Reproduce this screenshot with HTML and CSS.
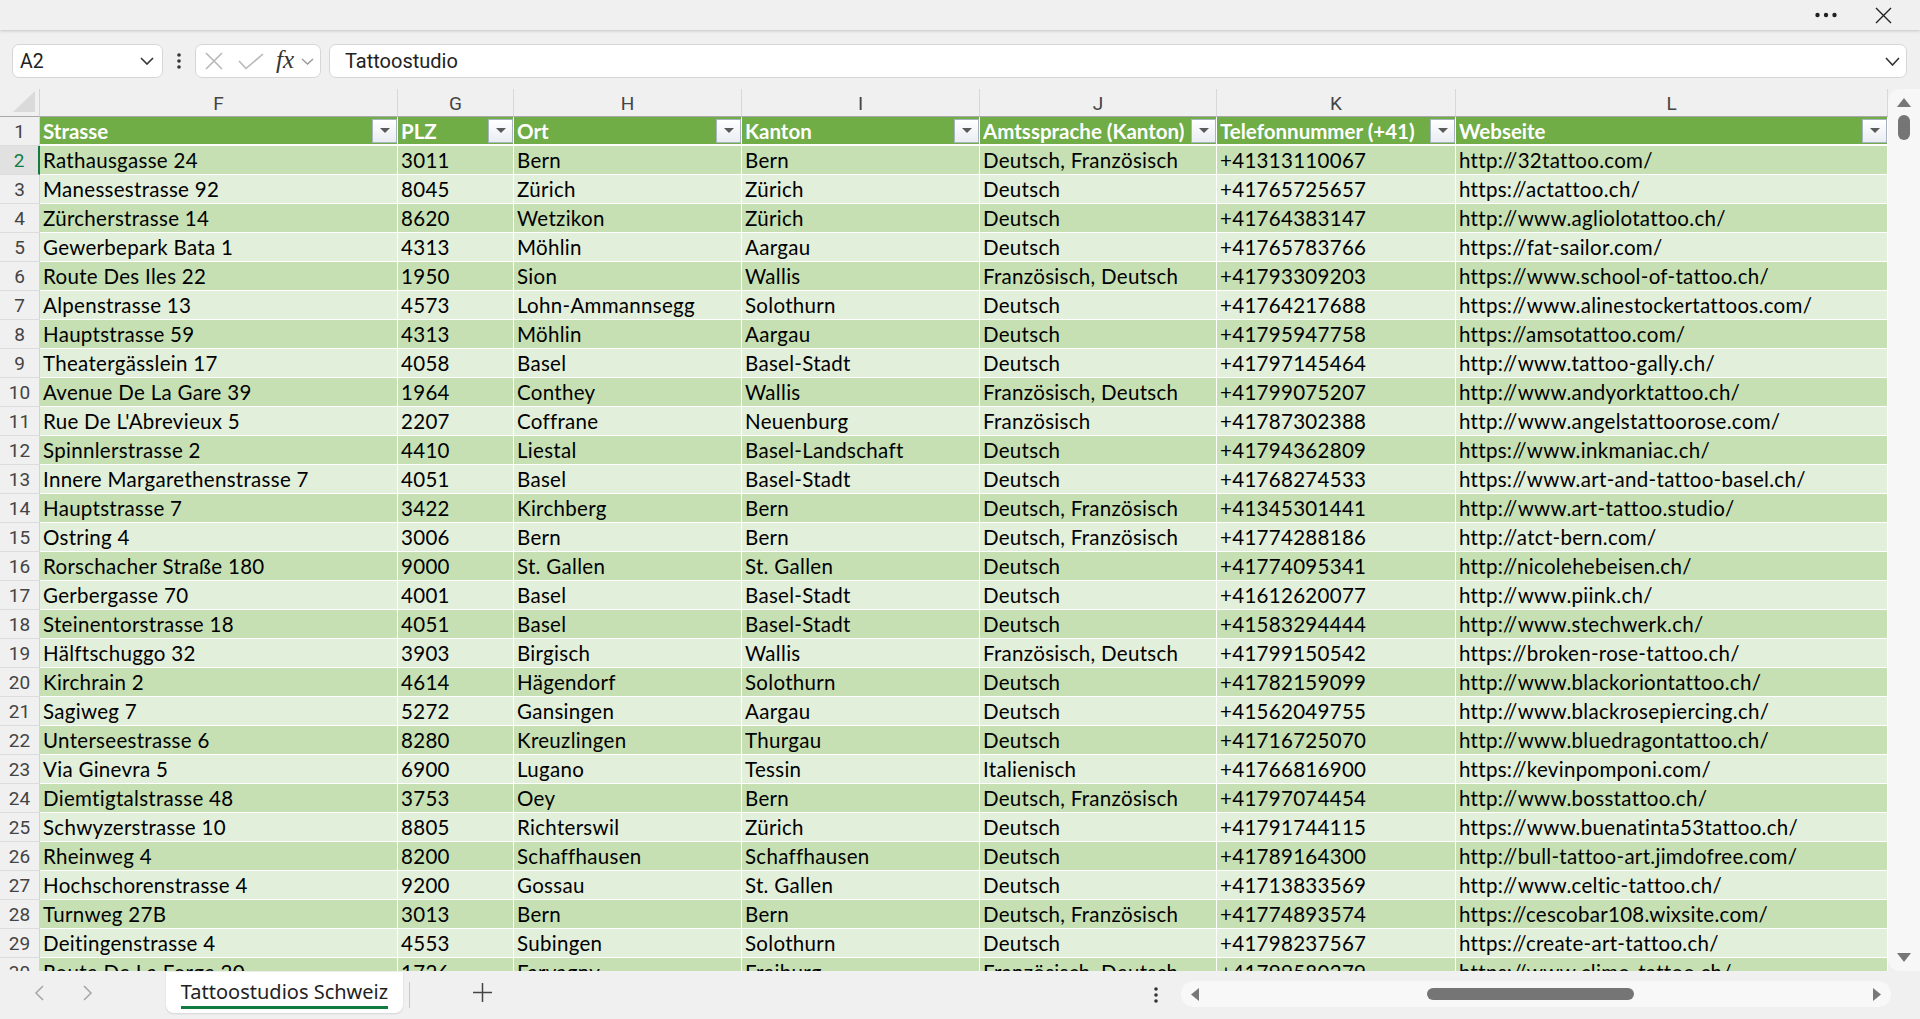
FILE: index.html
```
<!DOCTYPE html>
<html lang="de">
<head>
<meta charset="utf-8">
<title>Tattoostudios Schweiz</title>
<link rel="stylesheet" href="styles.css">
</head>
<body>

<div class="titlebar">
  <svg class="tb-more" width="22" height="6" viewBox="0 0 22 6"><circle cx="2.5" cy="3" r="2.2"/><circle cx="11" cy="3" r="2.2"/><circle cx="19.5" cy="3" r="2.2"/></svg>
  <svg class="tb-close" width="17" height="17" viewBox="0 0 17 17"><path d="M1 1L16 16M16 1L1 16"/></svg>
</div>

<div class="formula-row">
  <div class="namebox">
    <span>A2</span>
    <svg width="14" height="8" viewBox="0 0 14 8"><polyline points="1,1 7,7 13,1"/></svg>
  </div>
  <svg class="vdots" width="4" height="16" viewBox="0 0 4 16"><circle cx="2" cy="2" r="1.8"/><circle cx="2" cy="8" r="1.8"/><circle cx="2" cy="14" r="1.8"/></svg>
  <div class="fxbox">
    <svg class="fx-cancel" width="18" height="18" viewBox="0 0 18 18"><path d="M1 1L17 17M17 1L1 17"/></svg>
    <svg class="fx-enter" width="26" height="17" viewBox="0 0 26 17"><polyline points="1,8 8,15.5 25,1"/></svg>
    <span class="fx">fx</span>
    <svg class="fx-chev" width="13" height="7" viewBox="0 0 13 7"><polyline points="1,1 6.5,6 12,1"/></svg>
  </div>
  <div class="formula-input">
    <span>Tattoostudio</span>
    <svg width="15" height="9" viewBox="0 0 15 9"><polyline points="1,1 7.5,8 14,1"/></svg>
  </div>
</div>

<div class="sheet-area">
  <div class="grid">
    <div class="row letters">
      <div class="corner"><svg width="22" height="21" viewBox="0 0 22 21"><polygon points="22,0 22,21 0,21"/></svg></div>
      <div>F</div><div>G</div><div>H</div><div>I</div><div>J</div><div>K</div><div>L</div>
    </div>
    <div class="row head">
      <div class="rn">1</div>
      <div><span>Strasse</span><i class="filter"></i></div>
      <div><span>PLZ</span><i class="filter"></i></div>
      <div><span>Ort</span><i class="filter"></i></div>
      <div><span>Kanton</span><i class="filter"></i></div>
      <div><span>Amtssprache (Kanton)</span><i class="filter"></i></div>
      <div><span>Telefonnummer (+41)</span><i class="filter"></i></div>
      <div><span>Webseite</span><i class="filter"></i></div>
    </div>
    <div class="row dark sel"><div class="rn">2</div><div>Rathausgasse 24</div><div>3011</div><div>Bern</div><div>Bern</div><div>Deutsch, Französisch</div><div>+41313110067</div><div>http://32tattoo.com/</div></div>
    <div class="row light"><div class="rn">3</div><div>Manessestrasse 92</div><div>8045</div><div>Zürich</div><div>Zürich</div><div>Deutsch</div><div>+41765725657</div><div>https://actattoo.ch/</div></div>
    <div class="row dark"><div class="rn">4</div><div>Zürcherstrasse 14</div><div>8620</div><div>Wetzikon</div><div>Zürich</div><div>Deutsch</div><div>+41764383147</div><div>http://www.agliolotattoo.ch/</div></div>
    <div class="row light"><div class="rn">5</div><div>Gewerbepark Bata 1</div><div>4313</div><div>Möhlin</div><div>Aargau</div><div>Deutsch</div><div>+41765783766</div><div>https://fat-sailor.com/</div></div>
    <div class="row dark"><div class="rn">6</div><div>Route Des Iles 22</div><div>1950</div><div>Sion</div><div>Wallis</div><div>Französisch, Deutsch</div><div>+41793309203</div><div>https://www.school-of-tattoo.ch/</div></div>
    <div class="row light"><div class="rn">7</div><div>Alpenstrasse 13</div><div>4573</div><div>Lohn-Ammannsegg</div><div>Solothurn</div><div>Deutsch</div><div>+41764217688</div><div>https://www.alinestockertattoos.com/</div></div>
    <div class="row dark"><div class="rn">8</div><div>Hauptstrasse 59</div><div>4313</div><div>Möhlin</div><div>Aargau</div><div>Deutsch</div><div>+41795947758</div><div>https://amsotattoo.com/</div></div>
    <div class="row light"><div class="rn">9</div><div>Theatergässlein 17</div><div>4058</div><div>Basel</div><div>Basel-Stadt</div><div>Deutsch</div><div>+41797145464</div><div>http://www.tattoo-gally.ch/</div></div>
    <div class="row dark"><div class="rn">10</div><div>Avenue De La Gare 39</div><div>1964</div><div>Conthey</div><div>Wallis</div><div>Französisch, Deutsch</div><div>+41799075207</div><div>http://www.andyorktattoo.ch/</div></div>
    <div class="row light"><div class="rn">11</div><div>Rue De L'Abrevieux 5</div><div>2207</div><div>Coffrane</div><div>Neuenburg</div><div>Französisch</div><div>+41787302388</div><div>http://www.angelstattoorose.com/</div></div>
    <div class="row dark"><div class="rn">12</div><div>Spinnlerstrasse 2</div><div>4410</div><div>Liestal</div><div>Basel-Landschaft</div><div>Deutsch</div><div>+41794362809</div><div>https://www.inkmaniac.ch/</div></div>
    <div class="row light"><div class="rn">13</div><div>Innere Margarethenstrasse 7</div><div>4051</div><div>Basel</div><div>Basel-Stadt</div><div>Deutsch</div><div>+41768274533</div><div>https://www.art-and-tattoo-basel.ch/</div></div>
    <div class="row dark"><div class="rn">14</div><div>Hauptstrasse 7</div><div>3422</div><div>Kirchberg</div><div>Bern</div><div>Deutsch, Französisch</div><div>+41345301441</div><div>http://www.art-tattoo.studio/</div></div>
    <div class="row light"><div class="rn">15</div><div>Ostring 4</div><div>3006</div><div>Bern</div><div>Bern</div><div>Deutsch, Französisch</div><div>+41774288186</div><div>http://atct-bern.com/</div></div>
    <div class="row dark"><div class="rn">16</div><div>Rorschacher Straße 180</div><div>9000</div><div>St. Gallen</div><div>St. Gallen</div><div>Deutsch</div><div>+41774095341</div><div>http://nicolehebeisen.ch/</div></div>
    <div class="row light"><div class="rn">17</div><div>Gerbergasse 70</div><div>4001</div><div>Basel</div><div>Basel-Stadt</div><div>Deutsch</div><div>+41612620077</div><div>http://www.piink.ch/</div></div>
    <div class="row dark"><div class="rn">18</div><div>Steinentorstrasse 18</div><div>4051</div><div>Basel</div><div>Basel-Stadt</div><div>Deutsch</div><div>+41583294444</div><div>http://www.stechwerk.ch/</div></div>
    <div class="row light"><div class="rn">19</div><div>Hälftschuggo 32</div><div>3903</div><div>Birgisch</div><div>Wallis</div><div>Französisch, Deutsch</div><div>+41799150542</div><div>https://broken-rose-tattoo.ch/</div></div>
    <div class="row dark"><div class="rn">20</div><div>Kirchrain 2</div><div>4614</div><div>Hägendorf</div><div>Solothurn</div><div>Deutsch</div><div>+41782159099</div><div>http://www.blackoriontattoo.ch/</div></div>
    <div class="row light"><div class="rn">21</div><div>Sagiweg 7</div><div>5272</div><div>Gansingen</div><div>Aargau</div><div>Deutsch</div><div>+41562049755</div><div>http://www.blackrosepiercing.ch/</div></div>
    <div class="row dark"><div class="rn">22</div><div>Unterseestrasse 6</div><div>8280</div><div>Kreuzlingen</div><div>Thurgau</div><div>Deutsch</div><div>+41716725070</div><div>http://www.bluedragontattoo.ch/</div></div>
    <div class="row light"><div class="rn">23</div><div>Via Ginevra 5</div><div>6900</div><div>Lugano</div><div>Tessin</div><div>Italienisch</div><div>+41766816900</div><div>https://kevinpomponi.com/</div></div>
    <div class="row dark"><div class="rn">24</div><div>Diemtigtalstrasse 48</div><div>3753</div><div>Oey</div><div>Bern</div><div>Deutsch, Französisch</div><div>+41797074454</div><div>http://www.bosstattoo.ch/</div></div>
    <div class="row light"><div class="rn">25</div><div>Schwyzerstrasse 10</div><div>8805</div><div>Richterswil</div><div>Zürich</div><div>Deutsch</div><div>+41791744115</div><div>https://www.buenatinta53tattoo.ch/</div></div>
    <div class="row dark"><div class="rn">26</div><div>Rheinweg 4</div><div>8200</div><div>Schaffhausen</div><div>Schaffhausen</div><div>Deutsch</div><div>+41789164300</div><div>http://bull-tattoo-art.jimdofree.com/</div></div>
    <div class="row light"><div class="rn">27</div><div>Hochschorenstrasse 4</div><div>9200</div><div>Gossau</div><div>St. Gallen</div><div>Deutsch</div><div>+41713833569</div><div>http://www.celtic-tattoo.ch/</div></div>
    <div class="row dark"><div class="rn">28</div><div>Turnweg 27B</div><div>3013</div><div>Bern</div><div>Bern</div><div>Deutsch, Französisch</div><div>+41774893574</div><div>https://cescobar108.wixsite.com/</div></div>
    <div class="row light"><div class="rn">29</div><div>Deitingenstrasse 4</div><div>4553</div><div>Subingen</div><div>Solothurn</div><div>Deutsch</div><div>+41798237567</div><div>https://create-art-tattoo.ch/</div></div>
    <div class="row dark"><div class="rn">30</div><div>Route De La Forge 20</div><div>1726</div><div>Farvagny</div><div>Freiburg</div><div>Französisch, Deutsch</div><div>+41799580279</div><div>https://www.climo-tattoo.ch/</div></div>
  </div>
  <div class="vscroll">
    <svg width="14" height="9" viewBox="0 0 14 9"><polygon points="7,0 14,9 0,9"/></svg>
    <div class="vthumb"></div>
    <div class="vfill"></div>
    <svg width="14" height="9" viewBox="0 0 14 9"><polygon points="0,0 14,0 7,9"/></svg>
  </div>
</div>

<div class="sheetbar">
  <div class="nav">
    <svg width="12" height="16" viewBox="0 0 12 16"><polyline points="10,1 3,8 10,15"/></svg>
    <svg width="12" height="16" viewBox="0 0 12 16"><polyline points="2,1 9,8 2,15"/></svg>
  </div>
  <div class="tab"><span>Tattoostudios Schweiz</span></div>
  <div class="tab-sep"></div>
  <svg class="add" width="19" height="19" viewBox="0 0 19 19"><path d="M9.5 0V19M0 9.5H19"/></svg>
  <div class="spacer"></div>
  <svg class="vdots bar-dots" width="4" height="16" viewBox="0 0 4 16"><circle cx="2" cy="2" r="1.8"/><circle cx="2" cy="8" r="1.8"/><circle cx="2" cy="14" r="1.8"/></svg>
  <div class="hscroll">
    <svg width="8" height="13" viewBox="0 0 8 13"><polygon points="8,0 8,13 0,6.5"/></svg>
    <div class="hthumb"></div>
    <div class="spacer"></div>
    <svg width="8" height="13" viewBox="0 0 8 13"><polygon points="0,0 8,6.5 0,13"/></svg>
  </div>
</div>

</body>
</html>
```

FILE: styles.css
```
html, body {
	margin: 0;
	padding: 0;
}
body {
	width: 1920px;
	height: 1019px;
	overflow: hidden;
	background: #f0f0f0;
	font-family: Lato, "Liberation Sans", sans-serif;
	color: #000;
}
svg {
	display: block;
}

/* title bar */
.titlebar {
	height: 30px;
	background: #f0f0f0;
	box-shadow: 0 1px 3px rgba(0, 0, 0, 0.18);
	display: flex;
	align-items: center;
	justify-content: flex-end;
	position: relative;
	z-index: 1;
}
.tb-more {
	fill: #222;
	margin-right: 38px;
}
.tb-close {
	stroke: #222;
	stroke-width: 1.4;
	margin-right: 28px;
}

/* formula row */
.formula-row {
	display: flex;
	align-items: center;
	height: 34px;
	margin-top: 14px;
	padding-left: 12px;
	font-family: Roboto, "Noto Sans", sans-serif;
	font-size: 19.5px;
	color: #222;
}
.namebox, .fxbox, .formula-input {
	height: 34px;
	box-sizing: border-box;
	background: #fff;
	border: 1px solid #d6d6d6;
	border-radius: 7px;
	display: flex;
	align-items: center;
}
.namebox {
	width: 151px;
	padding: 0 8px 0 7px;
	justify-content: space-between;
}
.namebox svg polyline {
	fill: none;
	stroke: #333;
	stroke-width: 1.6;
}
.vdots {
	fill: #333;
	margin: 0 14px 0 14px;
}
.fxbox {
	width: 126px;
	padding-left: 9px;
}
.fx-cancel path, .fx-enter polyline {
	fill: none;
	stroke: #b7b7b7;
	stroke-width: 1.6;
}
.fx-enter {
	margin-left: 15px;
}
.fx {
	font-family: "Liberation Serif", serif;
	font-style: italic;
	font-size: 25px;
	color: #333;
	margin-left: 12px;
	line-height: 1;
	margin-top: -4px;
}
.fx-chev {
	margin-left: 7px;
}
.fx-chev polyline {
	fill: none;
	stroke: #9a9a9a;
	stroke-width: 1.4;
}
.formula-input {
	width: 1578px;
	margin-left: 8px;
	padding: 0 6px 0 15px;
	justify-content: space-between;
}
.formula-input span {
	font-size: 20px;
}
.formula-input svg polyline {
	fill: none;
	stroke: #333;
	stroke-width: 1.6;
}

/* sheet */
.sheet-area {
	display: flex;
	height: 882px;
	margin-top: 11px;
}
.grid {
	width: 1888px;
	overflow: hidden;
	font-size: 20.5px;
	letter-spacing: 0.3px;
}
.row {
	display: grid;
	grid-template-columns: 40px 358px 116px 228px 238px 237px 239px 432px;
	height: 29px;
}
.row > div {
	box-sizing: border-box;
	border-right: 1px solid #fff;
	border-bottom: 1px solid #fff;
	padding-left: 3px;
	white-space: nowrap;
	overflow: hidden;
	display: flex;
	align-items: center;
}
.row > .rn {
	justify-content: center;
	padding: 0;
	background: #f0f0f0;
	color: #444;
	border-right: 1px solid #d4d4d4;
	border-bottom: 1px solid #dcdcdc;
	font-family: Roboto, "Noto Sans", sans-serif;
	font-size: 19px;
	letter-spacing: 0;
}
.row.sel > .rn {
	background: #e1e1e1;
	color: #107c41;
	border-right: 2px solid #107c41;
}
.dark > div {
	background: #c6e0b4;
}
.light > div {
	background: #e2efda;
}

.letters {
	height: 28px;
}
.letters > div {
	justify-content: center;
	padding: 0;
	background: #f0f0f0;
	color: #444;
	border-right: 1px solid #d8d8d8;
	border-bottom: 1px solid #a8a8a8;
	font-family: Roboto, "Noto Sans", sans-serif;
	font-size: 19px;
	letter-spacing: 0;
	padding-top: 2px;
}
.letters > .corner {
	justify-content: flex-end;
	align-items: flex-end;
	padding: 0 4px 4px 0;
	border-right: 1px solid #d4d4d4;
}
.corner svg {
	fill: #dadada;
}

.head > div {
	background: #70ad47;
	color: #fff;
	font-weight: bold;
	letter-spacing: 0;
	justify-content: space-between;
	border-bottom: 2px solid #fff;
	padding-right: 0;
}
.head > .rn {
	font-weight: normal;
	border-bottom: 1px solid #dcdcdc;
}
.head span {
	overflow: hidden;
}
.filter {
	flex: none;
	width: 25px;
	height: 24px;
	box-sizing: border-box;
	border: 1px solid #a9b2bf;
	background: linear-gradient(#ffffff, #e9edf2);
	display: flex;
	align-items: center;
	justify-content: center;
}
.filter::after {
	content: "";
	border-left: 5px solid transparent;
	border-right: 5px solid transparent;
	border-top: 5px solid #5a5a5a;
}

/* vertical scrollbar */
.vscroll {
	width: 32px;
	background: #f7f7f7;
	border-radius: 12px 0 0 12px;
	display: flex;
	flex-direction: column;
	align-items: center;
	padding-top: 9px;
	padding-bottom: 9px;
	box-sizing: border-box;
	fill: #777;
}
.vthumb {
	width: 12px;
	height: 25px;
	border-radius: 6px;
	background: #757575;
	margin-top: 8px;
}
.vfill {
	flex: 1;
}

/* sheet tabs */
.sheetbar {
	height: 48px;
	display: flex;
	align-items: flex-start;
}
.nav {
	width: 166px;
	display: flex;
	padding-left: 33px;
	box-sizing: border-box;
	margin-top: 14px;
}
.nav svg + svg {
	margin-left: 37px;
}
.nav polyline {
	fill: none;
	stroke: #a5a5a5;
	stroke-width: 1.5;
}
.tab {
	width: 237px;
	height: 41px;
	margin-top: 1px;
	background: #fff;
	border-radius: 0 0 8px 8px;
	box-shadow: 0 1px 2px rgba(0, 0, 0, 0.12);
	display: flex;
	justify-content: center;
	font-family: "Noto Sans", "Open Sans", sans-serif;
	font-size: 20px;
	color: #222;
}
.tab span {
	padding-top: 6px;
	height: 28px;
	line-height: 28px;
	border-bottom: 3px solid #107c41;
}
.tab-sep {
	width: 1px;
	height: 26px;
	margin: 11px 0 0 6px;
	background: #c8c8c8;
}
.add {
	margin: 12px 0 0 63px;
}
.add path {
	stroke: #444;
	stroke-width: 1.5;
}
.spacer {
	flex: 1;
}
.bar-dots {
	margin: 16px 23px 0 0;
}
.hscroll {
	width: 710px;
	height: 26px;
	margin: 10px 29px 0 0;
	background: #f8f8f8;
	border-radius: 13px;
	display: flex;
	align-items: center;
	padding: 0 10px;
	box-sizing: border-box;
	fill: #777;
}
.hthumb {
	width: 207px;
	height: 12px;
	border-radius: 6px;
	background: #757575;
	margin-left: 228px;
}
```
